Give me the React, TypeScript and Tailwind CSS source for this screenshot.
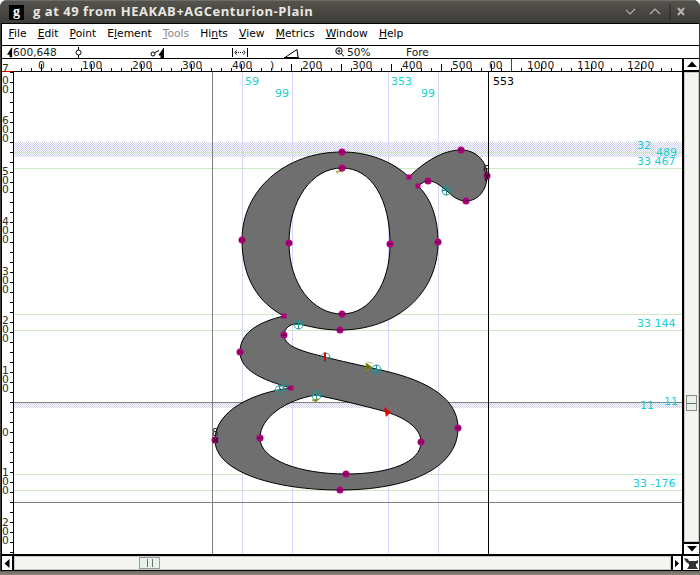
import type { ReactNode } from "react"

const menus: [string, string, string, boolean?][] = [
  ["", "F", "ile"],
  ["", "E", "dit"],
  ["", "P", "oint"],
  ["E", "l", "ement"],
  ["", "T", "ools", true],
  ["Hi", "n", "ts"],
  ["", "V", "iew"],
  ["", "M", "etrics"],
  ["", "W", "indow"],
  ["", "H", "elp"],
]

const topLabels: [string, number][] = [
  ["0", 38],
  ["100", 82],
  ["200", 132],
  ["300", 182],
  ["400", 232],
  [")", 270],
  ["200", 302],
  ["300", 352],
  ["400", 402],
  ["500", 452],
  ["00", 489],
  ["1000", 527],
  ["1100", 577],
  ["1200", 627],
]

const sideLabels: [string, number][] = [
  ["0", 84],
  ["0", 93],
  ["6", 124],
  ["0", 133],
  ["0", 142],
  ["5", 175],
  ["0", 184],
  ["0", 193],
  ["4", 225],
  ["0", 234],
  ["0", 243],
  ["3", 275],
  ["0", 284],
  ["0", 293],
  ["2", 324],
  ["0", 333],
  ["0", 342],
  ["1", 374],
  ["0", 383],
  ["0", 392],
  ["0", 436],
  ["1", 476],
  ["0", 485],
  ["0", 494],
  ["2", 526],
  ["0", 535],
  ["0", 544],
]

const range = (from: number, to: number, step: number) => {
  const out: number[] = []
  for (let v = from; v <= to; v += step) out.push(v)
  return out
}

const glyphPath =
  "M342 152C285 152 242 190 242 240C242 277 258 303 284 316C258 322 240 333 240 352C240 370 262 380 291 388C255 392 215 410 215 440C215 472 275 490 340 490C405 490 458 470 458 428C458 395 420 378 376 369C360 365 340 361 325 357C305 352 284 347 284 335C284 329 290 323 298 324C310 326 320 330 340 330C395 330 438 295 438 242C438 218 431 198 418 186C422 183 425 181 428 181C436 181 440 186 446 190C452 196 458 201 466 201C478 201 487 190 487 176C487 160 475 150 461 150C443 150 424 162 409 177C392 161 368 152 342 152Z" +
  "M342 168C312 168 289 200 289 243C289 283 312 314 342 314C370 314 390 284 390 244C390 200 372 168 342 168Z" +
  "M316 395C285 400 260 418 260 438C260 460 300 474 346 474C390 474 421 462 421 442C421 428 405 418 387 412C365 406 340 400 316 395Z"

const curvePoints = [
  [342, 152], [342, 168], [461, 150], [466, 201], [428, 181], [487, 176],
  [242, 240], [289, 243], [390, 244], [438, 242], [342, 314], [340, 330],
  [284, 335], [240, 352], [458, 428], [421, 442], [346, 474], [340, 490], [260, 438], [215, 440],
]
const cornerPoints = [[409, 177], [418, 186], [284, 316], [291, 388]]
const tangentPoints = [[446, 190], [298, 324], [325, 357], [376, 369], [279, 390], [283, 385], [316, 395]]

const cyanLabels: [string, number, number][] = [
  ["59", 245, 85],
  ["99", 275, 97],
  ["353", 391, 85],
  ["99", 421, 97],
  ["32", 637, 149],
  ["489", 656, 156],
  ["33 467", 637, 165],
  ["33 144", 637, 327],
  ["-11", 660, 405],
  ["11", 640, 409],
  ["33 -176", 633, 487],
]

function TopRuler() {
  return (
    <svg width="680" height="13" viewBox="2 59 680 13" className="block font-['DejaVu_Sans',sans-serif]">
      {range(21, 680, 10).map((x) => (
        <line key={x} x1={x + 0.5} x2={x + 0.5} y1={(x - 41) % 50 === 0 ? 64 : 68} y2="71" stroke="#000" />
      ))}
      <line x1="2" x2="682" y1="71.5" y2="71.5" stroke="#000" />
      {topLabels.map(([t, x], i) => (
        <text key={i} x={x} y="69" fontSize="10.7" fill="#1c1c10">{t}</text>
      ))}
      <line x1="511.5" x2="511.5" y1="59" y2="71" stroke="#e00000" />
      <line x1="2" x2="13" y1="71.5" y2="71.5" stroke="#e00000" />
      <text x="2" y="72" fontSize="10.7" fill="#33310f">7</text>
    </svg>
  )
}

function SideRuler() {
  return (
    <svg width="12" height="482" viewBox="2 72 12 482" className="block shrink-0 font-['DejaVu_Sans',sans-serif]">
      {range(72, 552, 10).map((y) => (
        <line key={y} x1="10" x2="13" y1={y + 0.5} y2={y + 0.5} stroke="#000" />
      ))}
      {sideLabels.map(([t, y], i) => (
        <text key={i} x="2" y={y} fontSize="10.7" fill="#33310f">{t}</text>
      ))}
      <line x1="13.5" x2="13.5" y1="72" y2="554" stroke="#000" />
    </svg>
  )
}

function Canvas() {
  return (
    <svg width="668" height="482" viewBox="14 72 668 482" className="block font-['DejaVu_Sans',sans-serif]">
      <defs>
        <pattern id="hatch" width="2" height="2" patternUnits="userSpaceOnUse">
          <rect width="2" height="2" fill="#fff" />
          <rect width="1" height="1" fill="#cdcdf3" />
          <rect x="1" y="1" width="1" height="1" fill="#cdcdf3" />
        </pattern>
      </defs>
      <rect x="14" y="142" width="668" height="15" fill="url(#hatch)" />
      <rect x="14" y="402" width="668" height="6" fill="url(#hatch)" />
      {[242, 292, 388, 438].map((x) => (
        <line key={x} x1={x + 0.5} x2={x + 0.5} y1="72" y2="554" stroke="#d6d6fb" />
      ))}
      {[152, 168, 314, 330, 474, 490].map((y) => (
        <line key={y} x1="14" x2="682" y1={y + 0.5} y2={y + 0.5} stroke="#cfe8c8" />
      ))}
      <line x1="14" x2="682" y1="402.5" y2="402.5" stroke="#808080" />
      <line x1="14" x2="682" y1="502.5" y2="502.5" stroke="#808080" />
      <line x1="212.5" x2="212.5" y1="72" y2="554" stroke="#808080" />
      <line x1="488.5" x2="488.5" y1="72" y2="554" stroke="#000" />
      <path d={glyphPath} fill="#6f6f6f" fillRule="evenodd" stroke="#000" />
      {curvePoints.map(([x, y]) => (
        <g key={`${x}-${y}`}>
          <circle cx={x} cy={y} r="3.5" fill="#b0007c" />
          <line x1={x - 3} x2={x + 3} y1={y} y2={y} stroke="#40002c" strokeWidth="0.7" />
        </g>
      ))}
      {cornerPoints.map(([x, y]) => (
        <rect key={x} x={x - 2.5} y={y - 2.5} width="5" height="5" fill="#b0007c" />
      ))}
      {tangentPoints.map(([x, y]) => (
        <g key={`${x}-${y}`} fill="none" stroke="#1f8f8f">
          <circle cx={x + 0.5} cy={y + 0.5} r="4.5" />
          <line x1={x - 4} x2={x + 5} y1={y + 0.5} y2={y + 0.5} />
          <line x1={x + 0.5} x2={x + 0.5} y1={y - 4} y2={y + 5} />
        </g>
      ))}
      <path d="M325 352.5v9" stroke="#e00000" strokeWidth="2" />
      <path d="M384 407l7 5l-5 5z" fill="#e80000" />
      <path d="M366 363l6 4l-6 4zM367 362l6 1" fill="#6b6b10" stroke="#9a9a20" strokeWidth="0.6" />
      <path d="M312 400l7-1l-3 3z" fill="#8a8a20" stroke="#8a8a20" strokeWidth="0.6" />
      <path d="M337 171l6 1M336 171l2 3" stroke="#8a8a20" fill="none" />
      <path d="M485 173l4 8M489 173l-4 8M213 437l5 6M218 437l-5 6" stroke="#000" />
      <text x="483" y="173" fontSize="10" fill="#222">6</text>
      <text x="212" y="436" fontSize="10" fill="#222">8</text>
      {cyanLabels.map(([t, x, y]) => (
        <text key={`${t}-${x}`} x={x} y={y} fontSize="11" fill="#14d0d0" className="whitespace-pre">{t}</text>
      ))}
      <text x="493" y="85" fontSize="11" fill="#000">553</text>
    </svg>
  )
}

function ArrowBox({ dir, className }: { dir: "up" | "down" | "left" | "right"; className: string }) {
  const d = { up: "M1 9L6 3.5L11 9Z", down: "M1 3L6 8.5L11 3Z", left: "M9 1L3 6.5L9 12Z", right: "M3 1L9 6.5L3 12Z" }[dir]
  return (
    <div className={`flex items-center justify-center bg-white ${className}`}>
      <svg width="12" height="13" viewBox="0 0 12 13"><path d={d} fill="#000" /></svg>
    </div>
  )
}

function Info({ className, children }: { className: string; children?: ReactNode }) {
  return <div className={`flex items-center ${className}`}>{children}</div>
}

export default function App() {
  return (
    <div className="w-[700px] h-[575px] bg-white overflow-hidden font-['DejaVu_Sans',sans-serif]">
      <div className="w-full h-full flex flex-col rounded-t-[7px] bg-[#3c3b37] overflow-hidden">
        {/* title bar */}
        <div className="h-[23px] shrink-0 flex items-center bg-gradient-to-b from-[#55534d] to-[#3c3b37] border-t border-[#6e6c66]">
          <div className="ml-[9px] w-[15px] h-[15px] bg-black flex items-center justify-center text-white text-[14px] leading-none font-['Liberation_Serif',serif] font-bold">g</div>
          <span className="ml-[9px] text-[13px] font-bold text-[#e8e6e0] whitespace-nowrap font-['Open_Sans',sans-serif] tracking-[0.52px]">g at 49 from HEAKAB+AGCenturion-Plain</span>
          <div className="ml-auto flex items-center text-[#b5b3ad]">
            <svg width="68" height="16" viewBox="0 0 68 16" fill="none" stroke="currentColor" strokeWidth="1.2">
              <path d="M-4 5l5 5l5-5M21 10l5-5l5 5" transform="translate(3 0)" />
              <path d="M44 0v16" stroke="#2e2d2a" />
              <path d="M52 4l6 7M58 4l-6 7" strokeWidth="2" />
            </svg>
            <div className="w-[6px]" />
          </div>
        </div>

        <div className="flex-1 mx-[1px] bg-black border-t border-black flex flex-col min-h-0 pl-[1px]">
          {/* menu */}
          <div className="h-[21px] shrink-0 bg-white flex items-center pl-[1px] text-[10.7px] text-black mb-px">
            {menus.map(([a, u, b, off]) => (
              <span key={a + u + b} className={`px-[5.6px] ${off ? "text-[#8a8a8a]" : ""}`}>
                {a}<u>{u}</u>{b}
              </span>
            ))}
          </div>

          {/* info */}
          <div className="h-[12px] shrink-0 bg-white flex text-[10.6px] leading-none text-[#1a1a1a] mb-px">
            <Info className="w-[11px] pl-[5px]">
              <svg width="7" height="11" viewBox="0 0 7 11"><path d="M5 0L0 8h3v3h3V0z" fill="#000" /></svg>
            </Info>
            <Info className="w-[62px]">600,648</Info>
            <Info className="w-[75px]">
              <svg width="7" height="11" viewBox="0 0 7 11" fill="none" stroke="#000"><path d="M3.5 0v3M3.5 8v3" /><circle cx="3.5" cy="5.5" r="2.5" /></svg>
            </Info>
            <Info className="w-[82px]">
              <svg width="14" height="11" viewBox="0 0 14 11" fill="none" stroke="#000"><circle cx="3" cy="7" r="2" /><path d="M5 5.5L9 3.5" /><path d="M14 1L9 8h2v3h3z" fill="#000" /></svg>
            </Info>
            <Info className="w-[52px]">
              <svg width="16" height="11" viewBox="0 0 16 11" fill="none" stroke="#000"><path d="M.5 1v9M15.5 1v9" /><path d="M4 5.5h8" strokeDasharray="1 1" /><path d="M4.5 3.5L3 5.5l1.5 2M11.5 3.5l1.500 2-1.500 2" /></svg>
            </Info>
            <Info className="w-[51px]">
              <svg width="15" height="11" viewBox="0 0 15 11" fill="none" stroke="#000"><path d="M0 10.500h15M1 10.500L13 2.500L14 10" /></svg>
            </Info>
            <Info className="w-[71px] gap-[3px]">
              <svg width="9" height="10" viewBox="0 0 9 10" fill="none" stroke="#000"><circle cx="4" cy="4" r="3.200" /><path d="M2.500 4h3M4 2.500v3M6.500 6.500L9 9.500" /></svg>
              <span>50%</span>
            </Info>
            <Info className="flex-1">Fore</Info>
          </div>

          {/* rulers, canvas and vertical scrollbar */}
          <div className="h-[495px] shrink-0 flex bg-white">
            <div className="w-[680px] flex flex-col">
              <TopRuler />
              <div className="flex">
                <SideRuler />
                <Canvas />
              </div>
            </div>
            <div className="w-[17px] flex flex-col border-l-2 border-black bg-[#f4f5f1]">
              <ArrowBox dir="up" className="h-[13px] border-b-2 border-black" />
              <div className="flex-1 border border-[#c8c8c4] flex flex-col">
                <div className="h-[322px]" />
                <div className="h-[16px] mx-[1px] border border-[#8a8a86] bg-[#e8f2ea] flex items-center justify-center">
                  <div className="w-[9px] h-px bg-[#707070]" />
                </div>
              </div>
              <ArrowBox dir="down" className="h-[12px] border-t-2 border-black" />
            </div>
          </div>

          {/* horizontal scrollbar */}
          <div className="h-[16px] shrink-0 flex bg-[#f4f5f1] border-t-2 border-black">
            <ArrowBox dir="left" className="w-[12px] border-r-2 border-black" />
            <div className="flex-1 border border-[#c8c8c4] flex pl-[124px]">
              <div className="w-[21px] border border-[#9a9a96] bg-[#e8f2ea] flex items-center justify-center gap-[4px]">
                <div className="w-px h-[8px] bg-[#707070]" />
                <div className="w-px h-[8px] bg-[#707070]" />
              </div>
            </div>
            <ArrowBox dir="right" className="w-[12px] border-x-2 border-black" />
            <div className="w-[16px] bg-white flex items-center justify-center">
              <svg width="14" height="12" viewBox="0 0 14 12" fill="#333">
                <path d="M0 1l4 1l1 2h7l2-1v3l-2 1v2l2 3H3l2-3V7L2 5z" />
              </svg>
            </div>
          </div>
        </div>
        <div className="h-[4px] shrink-0 bg-gradient-to-b from-[#6a675f] to-[#8a8778]" />
      </div>
    </div>
  )
}
